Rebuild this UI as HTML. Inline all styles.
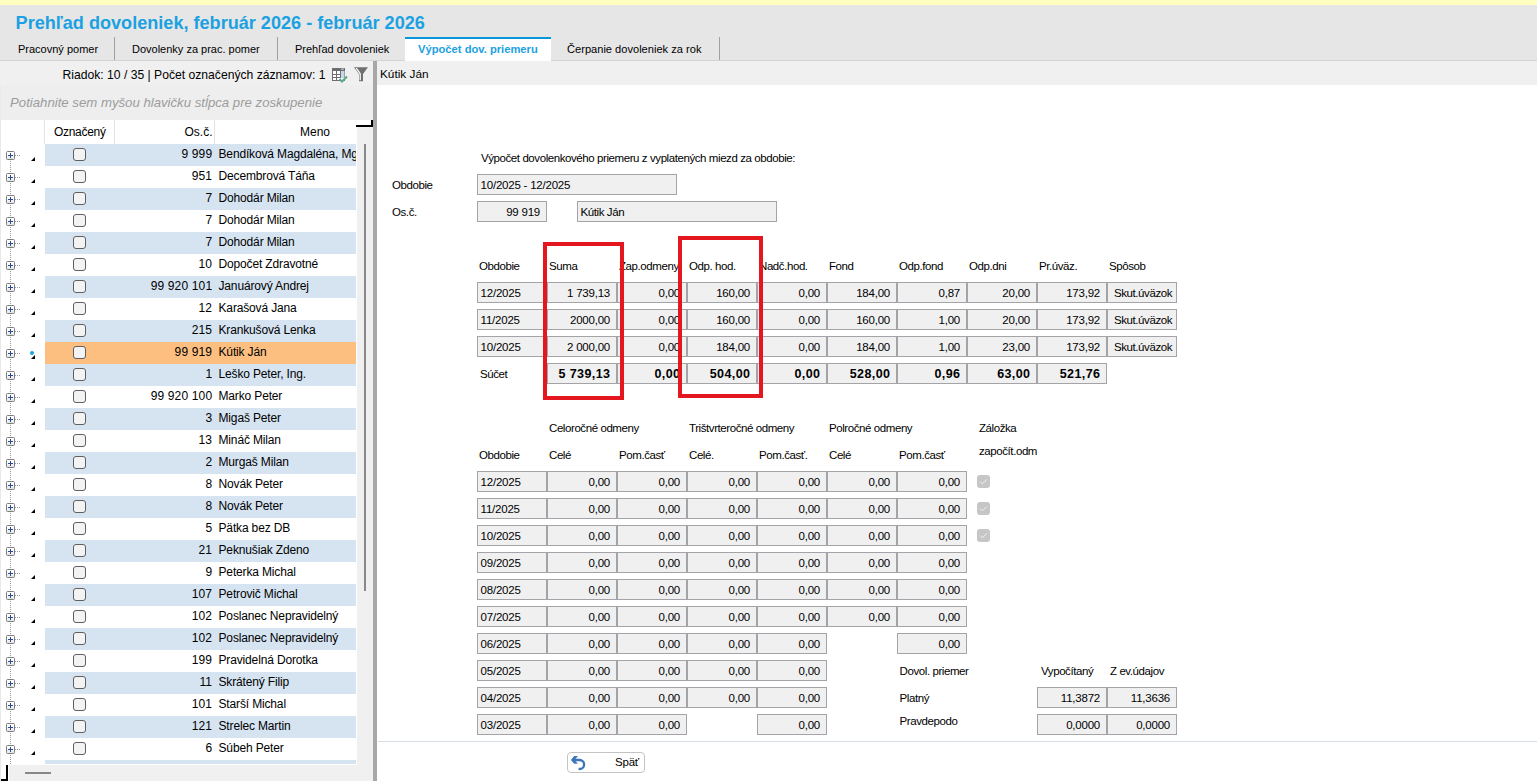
<!DOCTYPE html>
<html><head><meta charset="utf-8"><title>Prehľad dovoleniek</title>
<style>
html,body{margin:0;padding:0;}
body{width:1537px;height:782px;overflow:hidden;position:relative;background:#fff;font-family:"Liberation Sans",sans-serif;color:#000;}
.a{position:absolute;}
.t{position:absolute;white-space:pre;line-height:1;}
.tb{position:absolute;box-sizing:border-box;border:1px solid #a3a3a8;background:#f0f0f0;height:21px;}
.cb{position:absolute;width:13px;height:13px;box-sizing:border-box;border:1px solid #5f5f5f;border-radius:3px;background:#f3f3f3;}
.pl{position:absolute;width:9px;height:9px;box-sizing:border-box;border:1px solid #7c7c7c;border-radius:1.5px;background:linear-gradient(#fff,#f6f6f6 55%,#e4e4e4);}
.pl:before{content:"";position:absolute;left:1px;top:3px;width:5px;height:1px;background:#2c4a9a;}
.pl:after{content:"";position:absolute;left:3px;top:1px;width:1px;height:5px;background:#2c4a9a;}
.tri{position:absolute;width:0;height:0;border-style:solid;border-width:0 0 4px 4px;border-color:transparent transparent #000 transparent;}
.dh{position:absolute;height:1px;background-image:linear-gradient(to right,#9a9a9a 50%,transparent 50%);background-size:2px 1px;}
.dv{position:absolute;width:1px;background-image:linear-gradient(to bottom,#9a9a9a 50%,transparent 50%);background-size:1px 2px;}
.red{position:absolute;box-sizing:border-box;border:4px solid #e3171d;}
.dcb{position:absolute;width:13px;height:13px;border-radius:3px;background:#c6c6c6;}
</style></head><body>

<div class="a" style="left:0px;top:0px;width:1537px;height:5px;background:#ffffc0;"></div>
<div class="a" style="left:0px;top:5px;width:1537px;height:55px;background:#e6e6e6;"></div>
<div class="a" style="left:0px;top:60px;width:1537px;height:1px;background:#d4d4d4;"></div>
<div class="t" style="top:13.78px;font-size:18.1px;left:15.6px;font-weight:bold;color:#1ba1e2;">Prehľad dovoleniek, február 2026 - február 2026</div>
<div class="t" style="top:43.69px;font-size:11px;left:18px;color:#000;">Pracovný pomer</div>
<div class="a" style="left:114px;top:37px;width:1px;height:23px;background:#a0a0a0;"></div>
<div class="t" style="top:43.69px;font-size:11px;left:132px;">Dovolenky za prac. pomer</div>
<div class="a" style="left:277px;top:37px;width:1px;height:23px;background:#a0a0a0;"></div>
<div class="t" style="top:43.69px;font-size:11px;left:295px;">Prehľad dovoleniek</div>
<div class="a" style="left:405px;top:37px;width:146px;height:24px;background:#ffffff;"></div>
<div class="a" style="left:405px;top:37px;width:146px;height:2px;background:#0a97d9;"></div>
<div class="t" style="top:43.52px;font-size:11.2px;left:418px;font-weight:bold;color:#1ba1e2;">Výpočet dov. priemeru</div>
<div class="t" style="top:43.60px;font-size:11.1px;left:567px;">Čerpanie dovoleniek za rok</div>
<div class="a" style="left:719px;top:37px;width:1px;height:23px;background:#a0a0a0;"></div>
<div class="a" style="left:0px;top:61px;width:373px;height:24px;background:#f0f0f0;"></div>
<div class="a" style="left:0px;top:85px;width:373px;height:35px;background:#eeeeee;"></div>
<div class="a" style="left:0px;top:85px;width:1px;height:697px;background:#eaeaea;"></div>
<div class="t" style="top:69.02px;font-size:12.15px;right:1211.5px;text-align:right;">Riadok: 10 / 35 | Počet označených záznamov: 1</div>
<svg class="a" style="left:330px;top:66px" width="20" height="18" viewBox="0 0 20 18">
<rect x="2.5" y="2.5" width="12" height="12" fill="#fff" stroke="#6e6e6e" stroke-width="1"/>
<rect x="2" y="2" width="13" height="3" fill="#6e6e6e"/>
<rect x="11" y="5" width="3.5" height="7" fill="#c5d7ea"/>
<rect x="11" y="2.6" width="3" height="1" fill="#c5d7ea"/>
<line x1="2.5" y1="8.5" x2="11" y2="8.5" stroke="#6e6e6e"/>
<line x1="2.5" y1="11.5" x2="10" y2="11.5" stroke="#6e6e6e"/>
<line x1="6.5" y1="5" x2="6.5" y2="14.5" stroke="#6e6e6e"/>
<line x1="10.5" y1="5" x2="10.5" y2="12" stroke="#6e6e6e"/>
<path d="M9.5 13 L12 15.5 L17 10.5" fill="none" stroke="#5aa688" stroke-width="2"/>
</svg>
<svg class="a" style="left:353px;top:66px" width="16" height="16" viewBox="0 0 16 16">
<path d="M1 1.2 H15 L10 8 V15.2 H6 V8 Z" fill="#6f6f6f"/>
<path d="M3.2 2.2 L7.2 7.6 V14.2" fill="none" stroke="#fff" stroke-width="1.3"/>
</svg>
<div class="t" style="top:96.13px;font-size:13.2px;left:10px;font-style:italic;color:#9c9c9c;">Potiahnite sem myšou hlavičku stĺpca pre zoskupenie</div>
<div class="a" style="left:1px;top:120px;width:356px;height:645px;background:#ffffff;"></div>
<div class="a" style="left:44px;top:120px;width:1px;height:24px;background:#e3e3e3;"></div>
<div class="a" style="left:114px;top:120px;width:1px;height:24px;background:#e3e3e3;"></div>
<div class="a" style="left:214px;top:120px;width:1px;height:24px;background:#e3e3e3;"></div>
<div class="t" style="top:126.34px;font-size:12px;left:54px;letter-spacing:-0.3px;">Označený</div>
<div class="t" style="top:126.34px;font-size:12px;right:1324.5px;text-align:right;">Os.č.</div>
<div class="t" style="top:126.34px;font-size:12px;left:300px;">Meno</div>
<div class="a" style="left:1px;top:144px;width:355px;height:620px;overflow:hidden;">
<div class="a" style="left:44px;top:0px;width:311px;height:22px;background:#d6e4f2"></div>
<div class="pl" style="left:5px;top:7px"></div>
<div class="dh" style="left:14px;top:11px;width:6px"></div>
<div class="tri" style="left:30px;top:13px"></div>
<div class="cb" style="left:72px;top:4px"></div>
<div class="t" style="top:4.34px;right:143.8px;font-size:12px;letter-spacing:0.15px">9 999</div>
<div class="t" style="top:4.34px;left:217.5px;font-size:12px;letter-spacing:-0.15px">Bendíková Magdaléna, Mgr.</div>
<div class="pl" style="left:5px;top:29px"></div>
<div class="dh" style="left:14px;top:33px;width:6px"></div>
<div class="tri" style="left:30px;top:35px"></div>
<div class="cb" style="left:72px;top:26px"></div>
<div class="t" style="top:26.34px;right:143.8px;font-size:12px;letter-spacing:0.15px">951</div>
<div class="t" style="top:26.34px;left:217.5px;font-size:12px;letter-spacing:-0.15px">Decembrová Táňa</div>
<div class="a" style="left:44px;top:44px;width:311px;height:22px;background:#d6e4f2"></div>
<div class="pl" style="left:5px;top:51px"></div>
<div class="dh" style="left:14px;top:55px;width:6px"></div>
<div class="tri" style="left:30px;top:57px"></div>
<div class="cb" style="left:72px;top:48px"></div>
<div class="t" style="top:48.34px;right:143.8px;font-size:12px;letter-spacing:0.15px">7</div>
<div class="t" style="top:48.34px;left:217.5px;font-size:12px;letter-spacing:-0.15px">Dohodár Milan</div>
<div class="pl" style="left:5px;top:73px"></div>
<div class="dh" style="left:14px;top:77px;width:6px"></div>
<div class="tri" style="left:30px;top:79px"></div>
<div class="cb" style="left:72px;top:70px"></div>
<div class="t" style="top:70.34px;right:143.8px;font-size:12px;letter-spacing:0.15px">7</div>
<div class="t" style="top:70.34px;left:217.5px;font-size:12px;letter-spacing:-0.15px">Dohodár Milan</div>
<div class="a" style="left:44px;top:88px;width:311px;height:22px;background:#d6e4f2"></div>
<div class="pl" style="left:5px;top:95px"></div>
<div class="dh" style="left:14px;top:99px;width:6px"></div>
<div class="tri" style="left:30px;top:101px"></div>
<div class="cb" style="left:72px;top:92px"></div>
<div class="t" style="top:92.34px;right:143.8px;font-size:12px;letter-spacing:0.15px">7</div>
<div class="t" style="top:92.34px;left:217.5px;font-size:12px;letter-spacing:-0.15px">Dohodár Milan</div>
<div class="pl" style="left:5px;top:117px"></div>
<div class="dh" style="left:14px;top:121px;width:6px"></div>
<div class="tri" style="left:30px;top:123px"></div>
<div class="cb" style="left:72px;top:114px"></div>
<div class="t" style="top:114.34px;right:143.8px;font-size:12px;letter-spacing:0.15px">10</div>
<div class="t" style="top:114.34px;left:217.5px;font-size:12px;letter-spacing:-0.15px">Dopočet Zdravotné</div>
<div class="a" style="left:44px;top:132px;width:311px;height:22px;background:#d6e4f2"></div>
<div class="pl" style="left:5px;top:139px"></div>
<div class="dh" style="left:14px;top:143px;width:6px"></div>
<div class="tri" style="left:30px;top:145px"></div>
<div class="cb" style="left:72px;top:136px"></div>
<div class="t" style="top:136.34px;right:143.8px;font-size:12px;letter-spacing:0.15px">99 920 101</div>
<div class="t" style="top:136.34px;left:217.5px;font-size:12px;letter-spacing:-0.15px">Januárový Andrej</div>
<div class="pl" style="left:5px;top:161px"></div>
<div class="dh" style="left:14px;top:165px;width:6px"></div>
<div class="tri" style="left:30px;top:167px"></div>
<div class="cb" style="left:72px;top:158px"></div>
<div class="t" style="top:158.34px;right:143.8px;font-size:12px;letter-spacing:0.15px">12</div>
<div class="t" style="top:158.34px;left:217.5px;font-size:12px;letter-spacing:-0.15px">Karašová Jana</div>
<div class="a" style="left:44px;top:176px;width:311px;height:22px;background:#d6e4f2"></div>
<div class="pl" style="left:5px;top:183px"></div>
<div class="dh" style="left:14px;top:187px;width:6px"></div>
<div class="tri" style="left:30px;top:189px"></div>
<div class="cb" style="left:72px;top:180px"></div>
<div class="t" style="top:180.34px;right:143.8px;font-size:12px;letter-spacing:0.15px">215</div>
<div class="t" style="top:180.34px;left:217.5px;font-size:12px;letter-spacing:-0.15px">Krankušová Lenka</div>
<div class="a" style="left:44px;top:198px;width:311px;height:22px;background:#fdbf80"></div>
<div class="pl" style="left:5px;top:205px"></div>
<div class="dh" style="left:14px;top:209px;width:6px"></div>
<div class="tri" style="left:30px;top:211px"></div>
<div class="cb" style="left:72px;top:202px"></div>
<div class="t" style="top:202.34px;right:143.8px;font-size:12px;letter-spacing:0.15px">99 919</div>
<div class="t" style="top:202.34px;left:217.5px;font-size:12px;letter-spacing:-0.15px">Kútik Ján</div>
<div class="a" style="left:44px;top:220px;width:311px;height:22px;background:#d6e4f2"></div>
<div class="pl" style="left:5px;top:227px"></div>
<div class="dh" style="left:14px;top:231px;width:6px"></div>
<div class="tri" style="left:30px;top:233px"></div>
<div class="cb" style="left:72px;top:224px"></div>
<div class="t" style="top:224.34px;right:143.8px;font-size:12px;letter-spacing:0.15px">1</div>
<div class="t" style="top:224.34px;left:217.5px;font-size:12px;letter-spacing:-0.15px">Leško Peter, Ing.</div>
<div class="pl" style="left:5px;top:249px"></div>
<div class="dh" style="left:14px;top:253px;width:6px"></div>
<div class="tri" style="left:30px;top:255px"></div>
<div class="cb" style="left:72px;top:246px"></div>
<div class="t" style="top:246.34px;right:143.8px;font-size:12px;letter-spacing:0.15px">99 920 100</div>
<div class="t" style="top:246.34px;left:217.5px;font-size:12px;letter-spacing:-0.15px">Marko Peter</div>
<div class="a" style="left:44px;top:264px;width:311px;height:22px;background:#d6e4f2"></div>
<div class="pl" style="left:5px;top:271px"></div>
<div class="dh" style="left:14px;top:275px;width:6px"></div>
<div class="tri" style="left:30px;top:277px"></div>
<div class="cb" style="left:72px;top:268px"></div>
<div class="t" style="top:268.34px;right:143.8px;font-size:12px;letter-spacing:0.15px">3</div>
<div class="t" style="top:268.34px;left:217.5px;font-size:12px;letter-spacing:-0.15px">Migaš Peter</div>
<div class="pl" style="left:5px;top:293px"></div>
<div class="dh" style="left:14px;top:297px;width:6px"></div>
<div class="tri" style="left:30px;top:299px"></div>
<div class="cb" style="left:72px;top:290px"></div>
<div class="t" style="top:290.34px;right:143.8px;font-size:12px;letter-spacing:0.15px">13</div>
<div class="t" style="top:290.34px;left:217.5px;font-size:12px;letter-spacing:-0.15px">Mináč Milan</div>
<div class="a" style="left:44px;top:308px;width:311px;height:22px;background:#d6e4f2"></div>
<div class="pl" style="left:5px;top:315px"></div>
<div class="dh" style="left:14px;top:319px;width:6px"></div>
<div class="tri" style="left:30px;top:321px"></div>
<div class="cb" style="left:72px;top:312px"></div>
<div class="t" style="top:312.34px;right:143.8px;font-size:12px;letter-spacing:0.15px">2</div>
<div class="t" style="top:312.34px;left:217.5px;font-size:12px;letter-spacing:-0.15px">Murgaš Milan</div>
<div class="pl" style="left:5px;top:337px"></div>
<div class="dh" style="left:14px;top:341px;width:6px"></div>
<div class="tri" style="left:30px;top:343px"></div>
<div class="cb" style="left:72px;top:334px"></div>
<div class="t" style="top:334.34px;right:143.8px;font-size:12px;letter-spacing:0.15px">8</div>
<div class="t" style="top:334.34px;left:217.5px;font-size:12px;letter-spacing:-0.15px">Novák Peter</div>
<div class="a" style="left:44px;top:352px;width:311px;height:22px;background:#d6e4f2"></div>
<div class="pl" style="left:5px;top:359px"></div>
<div class="dh" style="left:14px;top:363px;width:6px"></div>
<div class="tri" style="left:30px;top:365px"></div>
<div class="cb" style="left:72px;top:356px"></div>
<div class="t" style="top:356.34px;right:143.8px;font-size:12px;letter-spacing:0.15px">8</div>
<div class="t" style="top:356.34px;left:217.5px;font-size:12px;letter-spacing:-0.15px">Novák Peter</div>
<div class="pl" style="left:5px;top:381px"></div>
<div class="dh" style="left:14px;top:385px;width:6px"></div>
<div class="tri" style="left:30px;top:387px"></div>
<div class="cb" style="left:72px;top:378px"></div>
<div class="t" style="top:378.34px;right:143.8px;font-size:12px;letter-spacing:0.15px">5</div>
<div class="t" style="top:378.34px;left:217.5px;font-size:12px;letter-spacing:-0.15px">Pätka bez DB</div>
<div class="a" style="left:44px;top:396px;width:311px;height:22px;background:#d6e4f2"></div>
<div class="pl" style="left:5px;top:403px"></div>
<div class="dh" style="left:14px;top:407px;width:6px"></div>
<div class="tri" style="left:30px;top:409px"></div>
<div class="cb" style="left:72px;top:400px"></div>
<div class="t" style="top:400.34px;right:143.8px;font-size:12px;letter-spacing:0.15px">21</div>
<div class="t" style="top:400.34px;left:217.5px;font-size:12px;letter-spacing:-0.15px">Peknušiak Zdeno</div>
<div class="pl" style="left:5px;top:425px"></div>
<div class="dh" style="left:14px;top:429px;width:6px"></div>
<div class="tri" style="left:30px;top:431px"></div>
<div class="cb" style="left:72px;top:422px"></div>
<div class="t" style="top:422.34px;right:143.8px;font-size:12px;letter-spacing:0.15px">9</div>
<div class="t" style="top:422.34px;left:217.5px;font-size:12px;letter-spacing:-0.15px">Peterka Michal</div>
<div class="a" style="left:44px;top:440px;width:311px;height:22px;background:#d6e4f2"></div>
<div class="pl" style="left:5px;top:447px"></div>
<div class="dh" style="left:14px;top:451px;width:6px"></div>
<div class="tri" style="left:30px;top:453px"></div>
<div class="cb" style="left:72px;top:444px"></div>
<div class="t" style="top:444.34px;right:143.8px;font-size:12px;letter-spacing:0.15px">107</div>
<div class="t" style="top:444.34px;left:217.5px;font-size:12px;letter-spacing:-0.15px">Petrovič Michal</div>
<div class="pl" style="left:5px;top:469px"></div>
<div class="dh" style="left:14px;top:473px;width:6px"></div>
<div class="tri" style="left:30px;top:475px"></div>
<div class="cb" style="left:72px;top:466px"></div>
<div class="t" style="top:466.34px;right:143.8px;font-size:12px;letter-spacing:0.15px">102</div>
<div class="t" style="top:466.34px;left:217.5px;font-size:12px;letter-spacing:-0.15px">Poslanec Nepravidelný</div>
<div class="a" style="left:44px;top:484px;width:311px;height:22px;background:#d6e4f2"></div>
<div class="pl" style="left:5px;top:491px"></div>
<div class="dh" style="left:14px;top:495px;width:6px"></div>
<div class="tri" style="left:30px;top:497px"></div>
<div class="cb" style="left:72px;top:488px"></div>
<div class="t" style="top:488.34px;right:143.8px;font-size:12px;letter-spacing:0.15px">102</div>
<div class="t" style="top:488.34px;left:217.5px;font-size:12px;letter-spacing:-0.15px">Poslanec Nepravidelný</div>
<div class="pl" style="left:5px;top:513px"></div>
<div class="dh" style="left:14px;top:517px;width:6px"></div>
<div class="tri" style="left:30px;top:519px"></div>
<div class="cb" style="left:72px;top:510px"></div>
<div class="t" style="top:510.34px;right:143.8px;font-size:12px;letter-spacing:0.15px">199</div>
<div class="t" style="top:510.34px;left:217.5px;font-size:12px;letter-spacing:-0.15px">Pravidelná Dorotka</div>
<div class="a" style="left:44px;top:528px;width:311px;height:22px;background:#d6e4f2"></div>
<div class="pl" style="left:5px;top:535px"></div>
<div class="dh" style="left:14px;top:539px;width:6px"></div>
<div class="tri" style="left:30px;top:541px"></div>
<div class="cb" style="left:72px;top:532px"></div>
<div class="t" style="top:532.34px;right:143.8px;font-size:12px;letter-spacing:0.15px">11</div>
<div class="t" style="top:532.34px;left:217.5px;font-size:12px;letter-spacing:-0.15px">Skrátený Filip</div>
<div class="pl" style="left:5px;top:557px"></div>
<div class="dh" style="left:14px;top:561px;width:6px"></div>
<div class="tri" style="left:30px;top:563px"></div>
<div class="cb" style="left:72px;top:554px"></div>
<div class="t" style="top:554.34px;right:143.8px;font-size:12px;letter-spacing:0.15px">101</div>
<div class="t" style="top:554.34px;left:217.5px;font-size:12px;letter-spacing:-0.15px">Starší Michal</div>
<div class="a" style="left:44px;top:572px;width:311px;height:22px;background:#d6e4f2"></div>
<div class="pl" style="left:5px;top:579px"></div>
<div class="dh" style="left:14px;top:583px;width:6px"></div>
<div class="tri" style="left:30px;top:585px"></div>
<div class="cb" style="left:72px;top:576px"></div>
<div class="t" style="top:576.34px;right:143.8px;font-size:12px;letter-spacing:0.15px">121</div>
<div class="t" style="top:576.34px;left:217.5px;font-size:12px;letter-spacing:-0.15px">Strelec Martin</div>
<div class="pl" style="left:5px;top:601px"></div>
<div class="dh" style="left:14px;top:605px;width:6px"></div>
<div class="tri" style="left:30px;top:607px"></div>
<div class="cb" style="left:72px;top:598px"></div>
<div class="t" style="top:598.34px;right:143.8px;font-size:12px;letter-spacing:0.15px">6</div>
<div class="t" style="top:598.34px;left:217.5px;font-size:12px;letter-spacing:-0.15px">Súbeh Peter</div>
<div class="a" style="left:44px;top:616px;width:311px;height:22px;background:#d6e4f2"></div>
<div class="pl" style="left:5px;top:623px"></div>
<div class="dh" style="left:14px;top:627px;width:6px"></div>
<div class="tri" style="left:30px;top:629px"></div>
<div class="cb" style="left:72px;top:620px"></div>
<div class="dv" style="left:9px;top:17px;height:12px"></div>
<div class="dv" style="left:9px;top:39px;height:12px"></div>
<div class="dv" style="left:9px;top:61px;height:12px"></div>
<div class="dv" style="left:9px;top:83px;height:12px"></div>
<div class="dv" style="left:9px;top:105px;height:12px"></div>
<div class="dv" style="left:9px;top:127px;height:12px"></div>
<div class="dv" style="left:9px;top:149px;height:12px"></div>
<div class="dv" style="left:9px;top:171px;height:12px"></div>
<div class="dv" style="left:9px;top:193px;height:12px"></div>
<div class="dv" style="left:9px;top:215px;height:12px"></div>
<div class="dv" style="left:9px;top:237px;height:12px"></div>
<div class="dv" style="left:9px;top:259px;height:12px"></div>
<div class="dv" style="left:9px;top:281px;height:12px"></div>
<div class="dv" style="left:9px;top:303px;height:12px"></div>
<div class="dv" style="left:9px;top:325px;height:12px"></div>
<div class="dv" style="left:9px;top:347px;height:12px"></div>
<div class="dv" style="left:9px;top:369px;height:12px"></div>
<div class="dv" style="left:9px;top:391px;height:12px"></div>
<div class="dv" style="left:9px;top:413px;height:12px"></div>
<div class="dv" style="left:9px;top:435px;height:12px"></div>
<div class="dv" style="left:9px;top:457px;height:12px"></div>
<div class="dv" style="left:9px;top:479px;height:12px"></div>
<div class="dv" style="left:9px;top:501px;height:12px"></div>
<div class="dv" style="left:9px;top:523px;height:12px"></div>
<div class="dv" style="left:9px;top:545px;height:12px"></div>
<div class="dv" style="left:9px;top:567px;height:12px"></div>
<div class="dv" style="left:9px;top:589px;height:12px"></div>
<div class="dv" style="left:9px;top:611px;height:12px"></div>
</div>
<div class="a" style="left:30px;top:351px;width:4px;height:4px;border-radius:50%;background:#1ba1e2"></div>
<div class="a" style="left:357px;top:127px;width:16px;height:654px;background:#f0f0f0;"></div>
<div class="a" style="left:364px;top:144px;width:2px;height:447px;background:#888888;"></div>
<div class="a" style="left:356px;top:125px;width:17px;height:2px;background:#000;"></div>
<div class="a" style="left:371px;top:120px;width:2px;height:7px;background:#000;"></div>
<div class="a" style="left:9px;top:765px;width:364px;height:16px;background:#f0f0f0;"></div>
<div class="a" style="left:25px;top:772px;width:26px;height:2px;background:#888888;"></div>
<div class="a" style="left:6px;top:765px;width:2px;height:16px;background:#000;"></div>
<div class="a" style="left:1px;top:779px;width:7px;height:2px;background:#000;"></div>
<div class="a" style="left:373px;top:61px;width:4px;height:720px;background:#a8a8a8;"></div>
<div class="a" style="left:377px;top:61px;width:1160px;height:24px;background:#f0f0f0;"></div>
<div class="t" style="top:69.21px;font-size:11.8px;left:380px;">Kútik Ján</div>
<div class="t" style="top:153.07px;font-size:11.5px;left:481px;letter-spacing:-0.42px;">Výpočet dovolenkového priemeru z vyplatených miezd za obdobie:</div>
<div class="t" style="top:180.07px;font-size:11.5px;left:392px;letter-spacing:-0.42px;">Obdobie</div>
<div class="tb" style="left:477px;top:174px;width:200px;height:21px"></div>
<div class="t" style="top:180.07px;font-size:11.5px;left:480.6px;letter-spacing:-0.22px;">10/2025 - 12/2025</div>
<div class="t" style="top:207.07px;font-size:11.5px;left:392px;letter-spacing:-0.42px;">Os.č.</div>
<div class="tb" style="left:477px;top:201px;width:70px;height:21px"></div>
<div class="t" style="top:207.07px;font-size:11.5px;right:997px;text-align:right;letter-spacing:-0.22px;">99 919</div>
<div class="tb" style="left:577px;top:201px;width:200px;height:21px"></div>
<div class="t" style="top:207.07px;font-size:11.5px;left:580.6px;letter-spacing:-0.42px;">Kútik Ján</div>
<div class="t" style="top:260.57px;font-size:11.5px;left:479px;letter-spacing:-0.42px;">Obdobie</div>
<div class="t" style="top:260.57px;font-size:11.5px;left:549px;letter-spacing:-0.42px;">Suma</div>
<div class="t" style="top:260.57px;font-size:11.5px;left:619px;letter-spacing:-0.42px;">Zap.odmeny</div>
<div class="t" style="top:260.57px;font-size:11.5px;left:689px;letter-spacing:-0.42px;">Odp. hod.</div>
<div class="t" style="top:260.57px;font-size:11.5px;left:759px;letter-spacing:-0.42px;">Nadč.hod.</div>
<div class="t" style="top:260.57px;font-size:11.5px;left:829px;letter-spacing:-0.42px;">Fond</div>
<div class="t" style="top:260.57px;font-size:11.5px;left:899px;letter-spacing:-0.42px;">Odp.fond</div>
<div class="t" style="top:260.57px;font-size:11.5px;left:969px;letter-spacing:-0.42px;">Odp.dni</div>
<div class="t" style="top:260.57px;font-size:11.5px;left:1039px;letter-spacing:-0.42px;">Pr.úväz.</div>
<div class="t" style="top:260.57px;font-size:11.5px;left:1109px;letter-spacing:-0.42px;">Spôsob</div>
<div class="tb" style="left:477px;top:282px;width:70px;height:21px"></div>
<div class="t" style="top:288.07px;font-size:11.5px;left:480.6px;letter-spacing:-0.22px;">12/2025</div>
<div class="tb" style="left:547px;top:282px;width:70px;height:21px"></div>
<div class="t" style="top:288.07px;font-size:11.5px;right:927px;text-align:right;letter-spacing:-0.22px;">1 739,13</div>
<div class="tb" style="left:617px;top:282px;width:70px;height:21px"></div>
<div class="t" style="top:288.07px;font-size:11.5px;right:857px;text-align:right;letter-spacing:-0.22px;">0,00</div>
<div class="tb" style="left:687px;top:282px;width:70px;height:21px"></div>
<div class="t" style="top:288.07px;font-size:11.5px;right:787px;text-align:right;letter-spacing:-0.22px;">160,00</div>
<div class="tb" style="left:757px;top:282px;width:70px;height:21px"></div>
<div class="t" style="top:288.07px;font-size:11.5px;right:717px;text-align:right;letter-spacing:-0.22px;">0,00</div>
<div class="tb" style="left:827px;top:282px;width:70px;height:21px"></div>
<div class="t" style="top:288.07px;font-size:11.5px;right:647px;text-align:right;letter-spacing:-0.22px;">184,00</div>
<div class="tb" style="left:897px;top:282px;width:70px;height:21px"></div>
<div class="t" style="top:288.07px;font-size:11.5px;right:577px;text-align:right;letter-spacing:-0.22px;">0,87</div>
<div class="tb" style="left:967px;top:282px;width:70px;height:21px"></div>
<div class="t" style="top:288.07px;font-size:11.5px;right:507px;text-align:right;letter-spacing:-0.22px;">20,00</div>
<div class="tb" style="left:1037px;top:282px;width:70px;height:21px"></div>
<div class="t" style="top:288.07px;font-size:11.5px;right:437px;text-align:right;letter-spacing:-0.22px;">173,92</div>
<div class="tb" style="left:1107px;top:282px;width:70px;height:21px"></div>
<div class="t" style="top:288.07px;font-size:11.5px;left:1114px;letter-spacing:-0.42px;">Skut.úväzok</div>
<div class="tb" style="left:477px;top:309px;width:70px;height:21px"></div>
<div class="t" style="top:315.07px;font-size:11.5px;left:480.6px;letter-spacing:-0.22px;">11/2025</div>
<div class="tb" style="left:547px;top:309px;width:70px;height:21px"></div>
<div class="t" style="top:315.07px;font-size:11.5px;right:927px;text-align:right;letter-spacing:-0.22px;">2000,00</div>
<div class="tb" style="left:617px;top:309px;width:70px;height:21px"></div>
<div class="t" style="top:315.07px;font-size:11.5px;right:857px;text-align:right;letter-spacing:-0.22px;">0,00</div>
<div class="tb" style="left:687px;top:309px;width:70px;height:21px"></div>
<div class="t" style="top:315.07px;font-size:11.5px;right:787px;text-align:right;letter-spacing:-0.22px;">160,00</div>
<div class="tb" style="left:757px;top:309px;width:70px;height:21px"></div>
<div class="t" style="top:315.07px;font-size:11.5px;right:717px;text-align:right;letter-spacing:-0.22px;">0,00</div>
<div class="tb" style="left:827px;top:309px;width:70px;height:21px"></div>
<div class="t" style="top:315.07px;font-size:11.5px;right:647px;text-align:right;letter-spacing:-0.22px;">160,00</div>
<div class="tb" style="left:897px;top:309px;width:70px;height:21px"></div>
<div class="t" style="top:315.07px;font-size:11.5px;right:577px;text-align:right;letter-spacing:-0.22px;">1,00</div>
<div class="tb" style="left:967px;top:309px;width:70px;height:21px"></div>
<div class="t" style="top:315.07px;font-size:11.5px;right:507px;text-align:right;letter-spacing:-0.22px;">20,00</div>
<div class="tb" style="left:1037px;top:309px;width:70px;height:21px"></div>
<div class="t" style="top:315.07px;font-size:11.5px;right:437px;text-align:right;letter-spacing:-0.22px;">173,92</div>
<div class="tb" style="left:1107px;top:309px;width:70px;height:21px"></div>
<div class="t" style="top:315.07px;font-size:11.5px;left:1114px;letter-spacing:-0.42px;">Skut.úväzok</div>
<div class="tb" style="left:477px;top:336px;width:70px;height:21px"></div>
<div class="t" style="top:342.07px;font-size:11.5px;left:480.6px;letter-spacing:-0.22px;">10/2025</div>
<div class="tb" style="left:547px;top:336px;width:70px;height:21px"></div>
<div class="t" style="top:342.07px;font-size:11.5px;right:927px;text-align:right;letter-spacing:-0.22px;">2 000,00</div>
<div class="tb" style="left:617px;top:336px;width:70px;height:21px"></div>
<div class="t" style="top:342.07px;font-size:11.5px;right:857px;text-align:right;letter-spacing:-0.22px;">0,00</div>
<div class="tb" style="left:687px;top:336px;width:70px;height:21px"></div>
<div class="t" style="top:342.07px;font-size:11.5px;right:787px;text-align:right;letter-spacing:-0.22px;">184,00</div>
<div class="tb" style="left:757px;top:336px;width:70px;height:21px"></div>
<div class="t" style="top:342.07px;font-size:11.5px;right:717px;text-align:right;letter-spacing:-0.22px;">0,00</div>
<div class="tb" style="left:827px;top:336px;width:70px;height:21px"></div>
<div class="t" style="top:342.07px;font-size:11.5px;right:647px;text-align:right;letter-spacing:-0.22px;">184,00</div>
<div class="tb" style="left:897px;top:336px;width:70px;height:21px"></div>
<div class="t" style="top:342.07px;font-size:11.5px;right:577px;text-align:right;letter-spacing:-0.22px;">1,00</div>
<div class="tb" style="left:967px;top:336px;width:70px;height:21px"></div>
<div class="t" style="top:342.07px;font-size:11.5px;right:507px;text-align:right;letter-spacing:-0.22px;">23,00</div>
<div class="tb" style="left:1037px;top:336px;width:70px;height:21px"></div>
<div class="t" style="top:342.07px;font-size:11.5px;right:437px;text-align:right;letter-spacing:-0.22px;">173,92</div>
<div class="tb" style="left:1107px;top:336px;width:70px;height:21px"></div>
<div class="t" style="top:342.07px;font-size:11.5px;left:1114px;letter-spacing:-0.42px;">Skut.úväzok</div>
<div class="t" style="top:369.07px;font-size:11.5px;left:480px;letter-spacing:-0.42px;">Súčet</div>
<div class="tb" style="left:547px;top:363px;width:70px;height:21px"></div>
<div class="t" style="top:367.62px;font-size:12.5px;right:926.6px;text-align:right;font-weight:bold;letter-spacing:0.4px;">5 739,13</div>
<div class="tb" style="left:617px;top:363px;width:70px;height:21px"></div>
<div class="t" style="top:367.62px;font-size:12.5px;right:856.6px;text-align:right;font-weight:bold;letter-spacing:0.4px;">0,00</div>
<div class="tb" style="left:687px;top:363px;width:70px;height:21px"></div>
<div class="t" style="top:367.62px;font-size:12.5px;right:786.6px;text-align:right;font-weight:bold;letter-spacing:0.4px;">504,00</div>
<div class="tb" style="left:757px;top:363px;width:70px;height:21px"></div>
<div class="t" style="top:367.62px;font-size:12.5px;right:716.6px;text-align:right;font-weight:bold;letter-spacing:0.4px;">0,00</div>
<div class="tb" style="left:827px;top:363px;width:70px;height:21px"></div>
<div class="t" style="top:367.62px;font-size:12.5px;right:646.6px;text-align:right;font-weight:bold;letter-spacing:0.4px;">528,00</div>
<div class="tb" style="left:897px;top:363px;width:70px;height:21px"></div>
<div class="t" style="top:367.62px;font-size:12.5px;right:576.6px;text-align:right;font-weight:bold;letter-spacing:0.4px;">0,96</div>
<div class="tb" style="left:967px;top:363px;width:70px;height:21px"></div>
<div class="t" style="top:367.62px;font-size:12.5px;right:506.5999999999999px;text-align:right;font-weight:bold;letter-spacing:0.4px;">63,00</div>
<div class="tb" style="left:1037px;top:363px;width:70px;height:21px"></div>
<div class="t" style="top:367.62px;font-size:12.5px;right:436.5999999999999px;text-align:right;font-weight:bold;letter-spacing:0.4px;">521,76</div>
<div class="red" style="left:543px;top:242px;width:81px;height:158px"></div>
<div class="red" style="left:678px;top:236px;width:85px;height:162px"></div>
<div class="t" style="top:422.67px;font-size:11.5px;left:549px;letter-spacing:-0.42px;">Celoročné odmeny</div>
<div class="t" style="top:422.67px;font-size:11.5px;left:689px;letter-spacing:-0.42px;">Trištvrteročné odmeny</div>
<div class="t" style="top:422.67px;font-size:11.5px;left:829px;letter-spacing:-0.42px;">Polročné odmeny</div>
<div class="t" style="top:422.67px;font-size:11.5px;left:979px;letter-spacing:-0.42px;">Záložka</div>
<div class="t" style="top:449.67px;font-size:11.5px;left:479px;letter-spacing:-0.42px;">Obdobie</div>
<div class="t" style="top:449.67px;font-size:11.5px;left:549px;letter-spacing:-0.42px;">Celé</div>
<div class="t" style="top:449.67px;font-size:11.5px;left:619px;letter-spacing:-0.42px;">Pom.časť</div>
<div class="t" style="top:449.67px;font-size:11.5px;left:689px;letter-spacing:-0.42px;">Celé.</div>
<div class="t" style="top:449.67px;font-size:11.5px;left:759px;letter-spacing:-0.42px;">Pom.časť.</div>
<div class="t" style="top:449.67px;font-size:11.5px;left:829px;letter-spacing:-0.42px;">Celé</div>
<div class="t" style="top:449.67px;font-size:11.5px;left:899px;letter-spacing:-0.42px;">Pom.časť</div>
<div class="t" style="top:445.77px;font-size:11.5px;left:979px;letter-spacing:-0.42px;">započít.odm</div>
<div class="tb" style="left:477px;top:471px;width:70px;height:21px"></div>
<div class="t" style="top:477.07px;font-size:11.5px;left:480.6px;letter-spacing:-0.22px;">12/2025</div>
<div class="tb" style="left:547px;top:471px;width:70px;height:21px"></div>
<div class="t" style="top:477.07px;font-size:11.5px;right:927px;text-align:right;letter-spacing:-0.22px;">0,00</div>
<div class="tb" style="left:617px;top:471px;width:70px;height:21px"></div>
<div class="t" style="top:477.07px;font-size:11.5px;right:857px;text-align:right;letter-spacing:-0.22px;">0,00</div>
<div class="tb" style="left:687px;top:471px;width:70px;height:21px"></div>
<div class="t" style="top:477.07px;font-size:11.5px;right:787px;text-align:right;letter-spacing:-0.22px;">0,00</div>
<div class="tb" style="left:757px;top:471px;width:70px;height:21px"></div>
<div class="t" style="top:477.07px;font-size:11.5px;right:717px;text-align:right;letter-spacing:-0.22px;">0,00</div>
<div class="tb" style="left:827px;top:471px;width:70px;height:21px"></div>
<div class="t" style="top:477.07px;font-size:11.5px;right:647px;text-align:right;letter-spacing:-0.22px;">0,00</div>
<div class="tb" style="left:897px;top:471px;width:70px;height:21px"></div>
<div class="t" style="top:477.07px;font-size:11.5px;right:577px;text-align:right;letter-spacing:-0.22px;">0,00</div>
<div class="dcb" style="left:977px;top:475px"></div>
<svg class="a" style="left:977px;top:475px" width="13" height="13" viewBox="0 0 13 13"><path d="M3.2 6.6 L5.4 8.8 L9.8 4.4" fill="none" stroke="#f2f2f2" stroke-width="1"/></svg>
<div class="tb" style="left:477px;top:498px;width:70px;height:21px"></div>
<div class="t" style="top:504.07px;font-size:11.5px;left:480.6px;letter-spacing:-0.22px;">11/2025</div>
<div class="tb" style="left:547px;top:498px;width:70px;height:21px"></div>
<div class="t" style="top:504.07px;font-size:11.5px;right:927px;text-align:right;letter-spacing:-0.22px;">0,00</div>
<div class="tb" style="left:617px;top:498px;width:70px;height:21px"></div>
<div class="t" style="top:504.07px;font-size:11.5px;right:857px;text-align:right;letter-spacing:-0.22px;">0,00</div>
<div class="tb" style="left:687px;top:498px;width:70px;height:21px"></div>
<div class="t" style="top:504.07px;font-size:11.5px;right:787px;text-align:right;letter-spacing:-0.22px;">0,00</div>
<div class="tb" style="left:757px;top:498px;width:70px;height:21px"></div>
<div class="t" style="top:504.07px;font-size:11.5px;right:717px;text-align:right;letter-spacing:-0.22px;">0,00</div>
<div class="tb" style="left:827px;top:498px;width:70px;height:21px"></div>
<div class="t" style="top:504.07px;font-size:11.5px;right:647px;text-align:right;letter-spacing:-0.22px;">0,00</div>
<div class="tb" style="left:897px;top:498px;width:70px;height:21px"></div>
<div class="t" style="top:504.07px;font-size:11.5px;right:577px;text-align:right;letter-spacing:-0.22px;">0,00</div>
<div class="dcb" style="left:977px;top:502px"></div>
<svg class="a" style="left:977px;top:502px" width="13" height="13" viewBox="0 0 13 13"><path d="M3.2 6.6 L5.4 8.8 L9.8 4.4" fill="none" stroke="#f2f2f2" stroke-width="1"/></svg>
<div class="tb" style="left:477px;top:525px;width:70px;height:21px"></div>
<div class="t" style="top:531.07px;font-size:11.5px;left:480.6px;letter-spacing:-0.22px;">10/2025</div>
<div class="tb" style="left:547px;top:525px;width:70px;height:21px"></div>
<div class="t" style="top:531.07px;font-size:11.5px;right:927px;text-align:right;letter-spacing:-0.22px;">0,00</div>
<div class="tb" style="left:617px;top:525px;width:70px;height:21px"></div>
<div class="t" style="top:531.07px;font-size:11.5px;right:857px;text-align:right;letter-spacing:-0.22px;">0,00</div>
<div class="tb" style="left:687px;top:525px;width:70px;height:21px"></div>
<div class="t" style="top:531.07px;font-size:11.5px;right:787px;text-align:right;letter-spacing:-0.22px;">0,00</div>
<div class="tb" style="left:757px;top:525px;width:70px;height:21px"></div>
<div class="t" style="top:531.07px;font-size:11.5px;right:717px;text-align:right;letter-spacing:-0.22px;">0,00</div>
<div class="tb" style="left:827px;top:525px;width:70px;height:21px"></div>
<div class="t" style="top:531.07px;font-size:11.5px;right:647px;text-align:right;letter-spacing:-0.22px;">0,00</div>
<div class="tb" style="left:897px;top:525px;width:70px;height:21px"></div>
<div class="t" style="top:531.07px;font-size:11.5px;right:577px;text-align:right;letter-spacing:-0.22px;">0,00</div>
<div class="dcb" style="left:977px;top:529px"></div>
<svg class="a" style="left:977px;top:529px" width="13" height="13" viewBox="0 0 13 13"><path d="M3.2 6.6 L5.4 8.8 L9.8 4.4" fill="none" stroke="#f2f2f2" stroke-width="1"/></svg>
<div class="tb" style="left:477px;top:552px;width:70px;height:21px"></div>
<div class="t" style="top:558.07px;font-size:11.5px;left:480.6px;letter-spacing:-0.22px;">09/2025</div>
<div class="tb" style="left:547px;top:552px;width:70px;height:21px"></div>
<div class="t" style="top:558.07px;font-size:11.5px;right:927px;text-align:right;letter-spacing:-0.22px;">0,00</div>
<div class="tb" style="left:617px;top:552px;width:70px;height:21px"></div>
<div class="t" style="top:558.07px;font-size:11.5px;right:857px;text-align:right;letter-spacing:-0.22px;">0,00</div>
<div class="tb" style="left:687px;top:552px;width:70px;height:21px"></div>
<div class="t" style="top:558.07px;font-size:11.5px;right:787px;text-align:right;letter-spacing:-0.22px;">0,00</div>
<div class="tb" style="left:757px;top:552px;width:70px;height:21px"></div>
<div class="t" style="top:558.07px;font-size:11.5px;right:717px;text-align:right;letter-spacing:-0.22px;">0,00</div>
<div class="tb" style="left:827px;top:552px;width:70px;height:21px"></div>
<div class="t" style="top:558.07px;font-size:11.5px;right:647px;text-align:right;letter-spacing:-0.22px;">0,00</div>
<div class="tb" style="left:897px;top:552px;width:70px;height:21px"></div>
<div class="t" style="top:558.07px;font-size:11.5px;right:577px;text-align:right;letter-spacing:-0.22px;">0,00</div>
<div class="tb" style="left:477px;top:579px;width:70px;height:21px"></div>
<div class="t" style="top:585.07px;font-size:11.5px;left:480.6px;letter-spacing:-0.22px;">08/2025</div>
<div class="tb" style="left:547px;top:579px;width:70px;height:21px"></div>
<div class="t" style="top:585.07px;font-size:11.5px;right:927px;text-align:right;letter-spacing:-0.22px;">0,00</div>
<div class="tb" style="left:617px;top:579px;width:70px;height:21px"></div>
<div class="t" style="top:585.07px;font-size:11.5px;right:857px;text-align:right;letter-spacing:-0.22px;">0,00</div>
<div class="tb" style="left:687px;top:579px;width:70px;height:21px"></div>
<div class="t" style="top:585.07px;font-size:11.5px;right:787px;text-align:right;letter-spacing:-0.22px;">0,00</div>
<div class="tb" style="left:757px;top:579px;width:70px;height:21px"></div>
<div class="t" style="top:585.07px;font-size:11.5px;right:717px;text-align:right;letter-spacing:-0.22px;">0,00</div>
<div class="tb" style="left:827px;top:579px;width:70px;height:21px"></div>
<div class="t" style="top:585.07px;font-size:11.5px;right:647px;text-align:right;letter-spacing:-0.22px;">0,00</div>
<div class="tb" style="left:897px;top:579px;width:70px;height:21px"></div>
<div class="t" style="top:585.07px;font-size:11.5px;right:577px;text-align:right;letter-spacing:-0.22px;">0,00</div>
<div class="tb" style="left:477px;top:606px;width:70px;height:21px"></div>
<div class="t" style="top:612.07px;font-size:11.5px;left:480.6px;letter-spacing:-0.22px;">07/2025</div>
<div class="tb" style="left:547px;top:606px;width:70px;height:21px"></div>
<div class="t" style="top:612.07px;font-size:11.5px;right:927px;text-align:right;letter-spacing:-0.22px;">0,00</div>
<div class="tb" style="left:617px;top:606px;width:70px;height:21px"></div>
<div class="t" style="top:612.07px;font-size:11.5px;right:857px;text-align:right;letter-spacing:-0.22px;">0,00</div>
<div class="tb" style="left:687px;top:606px;width:70px;height:21px"></div>
<div class="t" style="top:612.07px;font-size:11.5px;right:787px;text-align:right;letter-spacing:-0.22px;">0,00</div>
<div class="tb" style="left:757px;top:606px;width:70px;height:21px"></div>
<div class="t" style="top:612.07px;font-size:11.5px;right:717px;text-align:right;letter-spacing:-0.22px;">0,00</div>
<div class="tb" style="left:827px;top:606px;width:70px;height:21px"></div>
<div class="t" style="top:612.07px;font-size:11.5px;right:647px;text-align:right;letter-spacing:-0.22px;">0,00</div>
<div class="tb" style="left:897px;top:606px;width:70px;height:21px"></div>
<div class="t" style="top:612.07px;font-size:11.5px;right:577px;text-align:right;letter-spacing:-0.22px;">0,00</div>
<div class="tb" style="left:477px;top:633px;width:70px;height:21px"></div>
<div class="t" style="top:639.07px;font-size:11.5px;left:480.6px;letter-spacing:-0.22px;">06/2025</div>
<div class="tb" style="left:547px;top:633px;width:70px;height:21px"></div>
<div class="t" style="top:639.07px;font-size:11.5px;right:927px;text-align:right;letter-spacing:-0.22px;">0,00</div>
<div class="tb" style="left:617px;top:633px;width:70px;height:21px"></div>
<div class="t" style="top:639.07px;font-size:11.5px;right:857px;text-align:right;letter-spacing:-0.22px;">0,00</div>
<div class="tb" style="left:687px;top:633px;width:70px;height:21px"></div>
<div class="t" style="top:639.07px;font-size:11.5px;right:787px;text-align:right;letter-spacing:-0.22px;">0,00</div>
<div class="tb" style="left:757px;top:633px;width:70px;height:21px"></div>
<div class="t" style="top:639.07px;font-size:11.5px;right:717px;text-align:right;letter-spacing:-0.22px;">0,00</div>
<div class="tb" style="left:897px;top:633px;width:70px;height:21px"></div>
<div class="t" style="top:639.07px;font-size:11.5px;right:577px;text-align:right;letter-spacing:-0.22px;">0,00</div>
<div class="tb" style="left:477px;top:660px;width:70px;height:21px"></div>
<div class="t" style="top:666.07px;font-size:11.5px;left:480.6px;letter-spacing:-0.22px;">05/2025</div>
<div class="tb" style="left:547px;top:660px;width:70px;height:21px"></div>
<div class="t" style="top:666.07px;font-size:11.5px;right:927px;text-align:right;letter-spacing:-0.22px;">0,00</div>
<div class="tb" style="left:617px;top:660px;width:70px;height:21px"></div>
<div class="t" style="top:666.07px;font-size:11.5px;right:857px;text-align:right;letter-spacing:-0.22px;">0,00</div>
<div class="tb" style="left:687px;top:660px;width:70px;height:21px"></div>
<div class="t" style="top:666.07px;font-size:11.5px;right:787px;text-align:right;letter-spacing:-0.22px;">0,00</div>
<div class="tb" style="left:757px;top:660px;width:70px;height:21px"></div>
<div class="t" style="top:666.07px;font-size:11.5px;right:717px;text-align:right;letter-spacing:-0.22px;">0,00</div>
<div class="tb" style="left:477px;top:687px;width:70px;height:21px"></div>
<div class="t" style="top:693.07px;font-size:11.5px;left:480.6px;letter-spacing:-0.22px;">04/2025</div>
<div class="tb" style="left:547px;top:687px;width:70px;height:21px"></div>
<div class="t" style="top:693.07px;font-size:11.5px;right:927px;text-align:right;letter-spacing:-0.22px;">0,00</div>
<div class="tb" style="left:617px;top:687px;width:70px;height:21px"></div>
<div class="t" style="top:693.07px;font-size:11.5px;right:857px;text-align:right;letter-spacing:-0.22px;">0,00</div>
<div class="tb" style="left:687px;top:687px;width:70px;height:21px"></div>
<div class="t" style="top:693.07px;font-size:11.5px;right:787px;text-align:right;letter-spacing:-0.22px;">0,00</div>
<div class="tb" style="left:757px;top:687px;width:70px;height:21px"></div>
<div class="t" style="top:693.07px;font-size:11.5px;right:717px;text-align:right;letter-spacing:-0.22px;">0,00</div>
<div class="tb" style="left:477px;top:714px;width:70px;height:21px"></div>
<div class="t" style="top:720.07px;font-size:11.5px;left:480.6px;letter-spacing:-0.22px;">03/2025</div>
<div class="tb" style="left:547px;top:714px;width:70px;height:21px"></div>
<div class="t" style="top:720.07px;font-size:11.5px;right:927px;text-align:right;letter-spacing:-0.22px;">0,00</div>
<div class="tb" style="left:617px;top:714px;width:70px;height:21px"></div>
<div class="t" style="top:720.07px;font-size:11.5px;right:857px;text-align:right;letter-spacing:-0.22px;">0,00</div>
<div class="tb" style="left:757px;top:714px;width:70px;height:21px"></div>
<div class="t" style="top:720.07px;font-size:11.5px;right:717px;text-align:right;letter-spacing:-0.22px;">0,00</div>
<div class="t" style="top:666.07px;font-size:11.5px;left:899.6px;letter-spacing:-0.42px;">Dovol. priemer</div>
<div class="t" style="top:666.07px;font-size:11.5px;left:1041px;letter-spacing:-0.42px;">Vypočítaný</div>
<div class="t" style="top:666.07px;font-size:11.5px;left:1110px;letter-spacing:-0.42px;">Z ev.údajov</div>
<div class="t" style="top:693.07px;font-size:11.5px;left:899.6px;letter-spacing:-0.42px;">Platný</div>
<div class="t" style="top:715.67px;font-size:11.5px;left:899.6px;letter-spacing:-0.42px;">Pravdepodo</div>
<div class="tb" style="left:1037px;top:687px;width:70px;height:21px"></div>
<div class="t" style="top:693.07px;font-size:11.5px;right:437px;text-align:right;letter-spacing:-0.22px;">11,3872</div>
<div class="tb" style="left:1107px;top:687px;width:70px;height:21px"></div>
<div class="t" style="top:693.07px;font-size:11.5px;right:367px;text-align:right;letter-spacing:-0.22px;">11,3636</div>
<div class="tb" style="left:1037px;top:714px;width:70px;height:21px"></div>
<div class="t" style="top:720.07px;font-size:11.5px;right:437px;text-align:right;letter-spacing:-0.22px;">0,0000</div>
<div class="tb" style="left:1107px;top:714px;width:70px;height:21px"></div>
<div class="t" style="top:720.07px;font-size:11.5px;right:367px;text-align:right;letter-spacing:-0.22px;">0,0000</div>
<div class="a" style="left:378px;top:741px;width:1159px;height:1px;background:#d5dee8;"></div>
<div class="a" style="left:567px;top:752px;width:78px;height:21px;box-sizing:border-box;border:1px solid #c4c4c4;border-radius:4px;background:#fff"></div>
<svg class="a" style="left:570px;top:755px" width="16" height="16" viewBox="0 0 16 16">
<path d="M4.2 0.9 L8 1.2 L5.5 3.8 L5.5 6.3 L8 8.5 L4.2 8.8 L0.9 4.9 Z" fill="#3b75b8"/>
<path d="M5 5 H9.6 A4.5 4.5 0 0 1 9.6 14 H8.6" fill="none" stroke="#3b75b8" stroke-width="2.3"/>
</svg>
<div class="t" style="top:757.27px;font-size:11.5px;left:615px;letter-spacing:-0.2px;">Späť</div>
</body></html>
